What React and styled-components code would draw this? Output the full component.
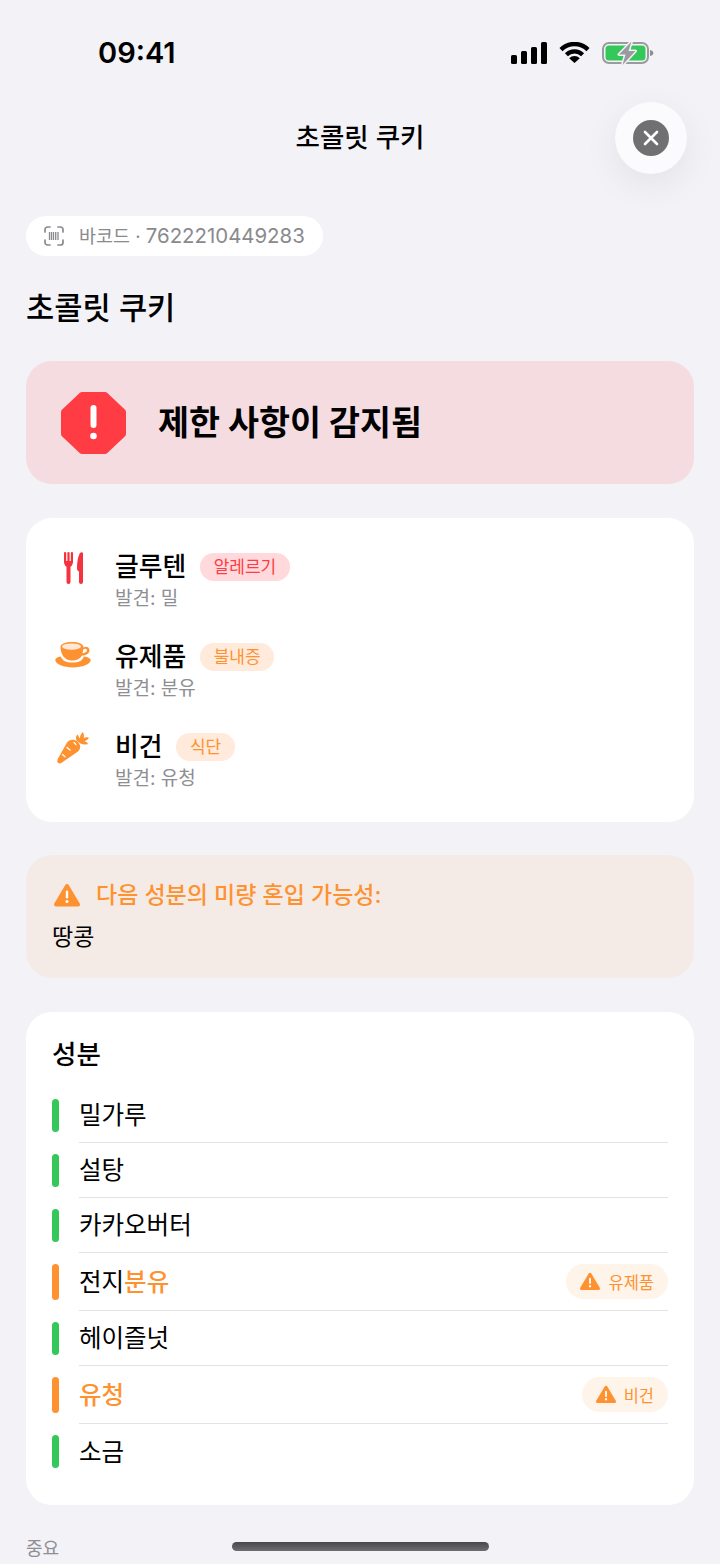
import React from 'react';
import styled, { createGlobalStyle } from 'styled-components';

const COLORS = {
  page: '#f2f2f7',
  white: '#ffffff',
  black: '#000000',
  gray: '#8e8e93',
  red: '#ff3b43',
  orange: '#ff9230',
  green: '#34c759',
  line: '#e3e3e6',
};

const FONT = '"Inter", "Noto Sans CJK KR", sans-serif';

const GlobalStyle = createGlobalStyle`
  html, body {
    margin: 0;
    padding: 0;
    background: ${COLORS.page};
    font-family: ${FONT};
    color: ${COLORS.black};
  }
  * {
    box-sizing: border-box;
  }
`;

const SignalIcon = () => (
  <svg width="36" height="22" viewBox="0 0 36 22">
    <rect x="0" y="13" width="6" height="9" rx="1.5" />
    <rect x="10" y="9" width="6" height="13" rx="1.5" />
    <rect x="20" y="5" width="6" height="17" rx="1.5" />
    <rect x="30" y="0" width="6" height="22" rx="1.5" />
  </svg>
);

const WifiIcon = () => (
  <svg width="31" height="21" viewBox="0 0 31 21">
    <path d="M2 7.6A19 19 0 0 1 29 7.6" fill="none" stroke="#000" strokeWidth="4.4" />
    <path d="M7.4 12.8A11.5 11.5 0 0 1 23.6 12.8" fill="none" stroke="#000" strokeWidth="4.2" />
    <path d="M15.5 21L10.2 16.2A7.4 7.4 0 0 1 20.8 16.2Z" />
  </svg>
);

const BatteryIcon = () => (
  <svg width="52" height="26" viewBox="0 0 52 26">
    <rect x="1" y="3" width="45" height="20" rx="6" fill="none" stroke="#9b9b9f" strokeWidth="2" />
    <rect x="3.5" y="5.5" width="40" height="15" rx="3.5" fill={COLORS.green} />
    <path d="M48 10c2 .4 3.4 1.4 3.4 3s-1.4 2.6-3.4 3z" fill="#8e8e92" />
    <path
      d="M29.500 1.500L17 14.500H23.500L20.500 25L33.500 11H26.500Z"
      fill="#9b9b9f"
      stroke={COLORS.page}
      strokeWidth="3"
      strokeLinejoin="round"
      paintOrder="stroke"
    />
  </svg>
);

const CloseGlyph = () => (
  <svg width="36" height="36" viewBox="0 0 36 36">
    <circle cx="18" cy="18" r="18" fill="#707072" />
    <path d="M12 12l12 12M24 12L12 24" stroke="#fff" strokeWidth="2.6" strokeLinecap="round" />
  </svg>
);

const BarcodeIcon = () => (
  <svg width="20" height="20" viewBox="0 0 20 20" fill="none">
    <path
      d="M1 6V3.5A2.5 2.5 0 0 1 3.5 1H6M14 1h2.500A2.500 2.500 0 0 1 19 3.500V6M19 14v2.500a2.500 2.500 0 0 1-2.500 2.500H14M6 19H3.500A2.500 2.500 0 0 1 1 16.500V14"
      stroke="#8a8a8e"
      strokeWidth="1.7"
      strokeLinecap="round"
    />
    <path d="M5.500 6v8M7.500 6v8M9.500 6v8M11.700 6v8M14 6v8" stroke="#8a8a8e" strokeWidth="1.300" />
  </svg>
);

const StopIcon = () => (
  <svg width="67" height="64" viewBox="0 0 67 64">
    <path
      d="M22 4H45L63 21V43L45 60H22L4 43V21Z"
      fill={COLORS.red}
      stroke={COLORS.red}
      strokeWidth="6"
      strokeLinejoin="round"
    />
    <rect x="30.500" y="14" width="6" height="23" rx="3" fill="#fff" />
    <circle cx="33.500" cy="45" r="3.300" fill="#fff" />
  </svg>
);

const UtensilsIcon = () => (
  <svg width="21" height="32" viewBox="0 0 21 32" fill="#f5333f">
    <rect x="1" y="0" width="2.200" height="11" rx="1" />
    <rect x="4.400" y="0" width="2.200" height="11" rx="1" />
    <rect x="7.800" y="0" width="2.200" height="11" rx="1" />
    <path d="M1 9H10C10 12 9 14 7.500 14.800V30a2 2 0 0 1-4 0V14.800C2 14 1 12 1 9Z" />
    <path d="M16.500 2C16.500.5 19.500-.5 20 1V30a2 2 0 0 1-4 0V19.500C14.500 19 14 18 14 16C14 10 15 5 16.500 2Z" />
  </svg>
);

const CupIcon = () => (
  <svg width="36" height="26" viewBox="0 0 36 26" fill={COLORS.orange}>
    <path d="M5.500 14.500C8 19 11 20.500 17.500 20.500C24 20.500 27 19 29 14.500C33 15 35.700 16.500 35.700 18.300C35.700 22 27 25.500 18 25.500C9 25.500 .3 22 .3 18.300C.3 16.500 2 15 5.500 14.500Z" />
    <path d="M5.500 5C5.500 1.500 11 0 17 0C23 0 28.500 1.500 28.500 5.500C31 3.800 34.500 5 34.500 8.200C34.500 11.500 30.500 13.500 27 13.500C25 16.800 22 18.500 17 18.500C9.500 18.500 5.500 12 5.500 5ZM28.200 7.500C28 9 27.800 10 27.500 11.200C29.700 11 32 10 32 8.200C32 6.800 29.700 6.200 28.200 7.500Z" fillRule="evenodd" />
    <ellipse cx="16.500" cy="4.600" rx="9.500" ry="3.200" fill="#ffe9d6" />
  </svg>
);

const CarrotIcon = () => (
  <svg width="32" height="32" viewBox="0 0 32 32" fill={COLORS.orange}>
    <path d="M1 30.800C0 29.800 .2 28.300 1 26.500L10 10.500C12 7.500 17 6.500 20.500 9.500C24 12.500 24 17 21 19.500L5 30.500C3.300 31.600 1.900 31.700 1 30.800Z" />
    <path d="M19.500 8.500C18.500 6 19 3.500 20.500 2.500C21.500 4 22 5 22.800 6.500C23 4 23.800 2 26 0C26.800 1.500 27.300 3.500 26.700 6C28.500 5 30 5 31.800 5.500C31.300 7.500 29 9 27 9.300C29 9.500 30.500 10.500 31 12C28.500 13 25.500 12.700 23.500 11.500C22.300 10.500 20.800 9.500 19.500 8.500Z" />
    <path d="M10 15.500L13 18M5.500 22.500L8 24.800M17 10.500L19 12.500" stroke="#fff" strokeWidth="1.300" strokeLinecap="round" />
  </svg>
);

const WarningIcon = ({ size = 26 }) => (
  <svg width={size} height={size * (24 / 26)} viewBox="0 0 26 24">
    <path
      d="M13 3L24 21.500H2Z"
      fill={COLORS.orange}
      stroke={COLORS.orange}
      strokeWidth="4"
      strokeLinejoin="round"
    />
    <rect x="11.800" y="7.500" width="2.400" height="8" rx="1.200" fill="#fff" />
    <circle cx="13" cy="18.500" r="1.500" fill="#fff" />
  </svg>
);

const RESTRICTIONS = [
  { name: '글루텐', tag: '알레르기', found: '발견: 밀', Icon: UtensilsIcon, tone: 'red' },
  { name: '유제품', tag: '불내증', found: '발견: 분유', Icon: CupIcon, tone: 'orange' },
  { name: '비건', tag: '식단', found: '발견: 유청', Icon: CarrotIcon, tone: 'orange' },
];

const INGREDIENTS = [
  { key: 'flour', parts: [{ text: '밀가루' }] },
  { key: 'sugar', parts: [{ text: '설탕' }] },
  { key: 'cacao', parts: [{ text: '카카오버터' }] },
  { key: 'milk', parts: [{ text: '전지' }, { text: '분유', hit: true }], badge: '유제품' },
  { key: 'hazelnut', parts: [{ text: '헤이즐넛' }] },
  { key: 'whey', parts: [{ text: '유청', hit: true }], badge: '비건' },
  { key: 'salt', parts: [{ text: '소금' }] },
];

const App = () => {
  return (
    <Screen>
      <GlobalStyle />
      <StatusBar>
        <Time>09:41</Time>
        <StatusIcons>
          <SignalIcon />
          <WifiIcon />
          <BatteryIcon />
        </StatusIcons>
      </StatusBar>

      <NavBar>
        <NavTitle>초콜릿 쿠키</NavTitle>
        <CloseButton>
          <CloseGlyph />
        </CloseButton>
      </NavBar>

      <Content>
        <BarcodePill>
          <BarcodeIcon />
          <BarcodeText>
            바코드 · <Digits>7622210449283</Digits>
          </BarcodeText>
        </BarcodePill>
        <ProductName>초콜릿 쿠키</ProductName>

        <AlertCard>
          <StopIcon />
          <AlertTitle>제한 사항이 감지됨</AlertTitle>
        </AlertCard>

        <RestrictionCard>
          {RESTRICTIONS.map(({ name, tag, found, Icon, tone }) => (
            <RestrictionRow key={name}>
              <IconSlot>
                <Icon />
              </IconSlot>
              <div>
                <NameLine>
                  <RestrictionName>{name}</RestrictionName>
                  <Tag $tone={tone}>{tag}</Tag>
                </NameLine>
                <FoundText>{found}</FoundText>
              </div>
            </RestrictionRow>
          ))}
        </RestrictionCard>

        <TraceCard>
          <TraceHeading>
            <WarningIcon />
            <TraceHeadingText>다음 성분의 미량 혼입 가능성:</TraceHeadingText>
          </TraceHeading>
          <TraceText>땅콩</TraceText>
        </TraceCard>

        <IngredientCard>
          <IngredientTitle>성분</IngredientTitle>
          {INGREDIENTS.map(({ key, parts, badge }) => (
            <IngredientRow key={key}>
              <StatusBarMark $flagged={Boolean(badge)} />
              <IngredientBody>
                <IngredientName>
                  {parts.map((part) => (
                    <NamePart key={part.text} $hit={part.hit}>
                      {part.text}
                    </NamePart>
                  ))}
                </IngredientName>
                {badge && (
                  <Badge>
                    <WarningIcon size={20} />
                    {badge}
                  </Badge>
                )}
              </IngredientBody>
            </IngredientRow>
          ))}
        </IngredientCard>

        <FootLabel>중요</FootLabel>
      </Content>

      <HomeIndicator />
    </Screen>
  );
};

const Screen = styled.div`
  position: relative;
  width: 720px;
  height: 1564px;
  overflow: hidden;
  background: ${COLORS.page};
`;

const StatusBar = styled.div`
  height: 100px;
  padding: 42px 66px 0 98px;
  display: flex;
  justify-content: space-between;
  align-items: flex-start;
`;

const Time = styled.div`
  font-size: 29px;
  line-height: 22px;
  font-weight: 600;
`;

const StatusIcons = styled.div`
  display: flex;
  align-items: flex-start;
  gap: 12px;

  svg:last-child {
    margin-top: -2px;
  }
`;

const NavBar = styled.div`
  position: relative;
  height: 74px;
  display: flex;
  align-items: center;
  justify-content: center;
`;

const NavTitle = styled.div`
  font-size: 26.500px;
  line-height: 34px;
  font-weight: 500;
`;

const CloseButton = styled.div`
  position: absolute;
  top: 2px;
  right: 33px;
  width: 72px;
  height: 72px;
  border-radius: 50%;
  background: #fbfbfd;
  box-shadow: 0 10px 36px rgba(0, 0, 0, 0.07);
  display: flex;
  align-items: center;
  justify-content: center;
`;

const Content = styled.div`
  padding: 42px 26px 0;
  display: flex;
  flex-direction: column;
  align-items: stretch;
`;

const BarcodePill = styled.div`
  align-self: flex-start;
  height: 40px;
  width: 297px;
  padding: 0 18px;
  border-radius: 20px;
  background: ${COLORS.white};
  display: flex;
  align-items: center;
  gap: 15px;
  font-size: 18.500px;
  color: #8a8a8e;
  white-space: nowrap;
`;

const BarcodeText = styled.span`
  margin-bottom: 2px;
`;

const Digits = styled.span`
  font-size: 20.400px;
`;

const ProductName = styled.h1`
  margin: 31px 0 32px;
  font-size: 30.700px;
  line-height: 42px;
  font-weight: 500;
`;

const AlertCard = styled.div`
  height: 123px;
  padding: 0 34px;
  border-radius: 26px;
  background: #f5dce1;
  display: flex;
  align-items: center;
  gap: 31px;
`;

const AlertTitle = styled.div`
  font-size: 33.700px;
  line-height: 42px;
  font-weight: 700;
`;

const RestrictionCard = styled.div`
  margin-top: 34px;
  padding: 33px 26px 31px;
  border-radius: 26px;
  background: ${COLORS.white};
  display: flex;
  flex-direction: column;
  gap: 30px;
`;

const RestrictionRow = styled.div`
  display: flex;
  align-items: flex-start;
  gap: 21px;
`;

const IconSlot = styled.div`
  width: 42px;
  padding-top: 1px;
  display: flex;
  justify-content: center;
`;

const NameLine = styled.div`
  height: 32px;
  display: flex;
  align-items: center;
  gap: 14px;
`;

const RestrictionName = styled.span`
  font-size: 25.800px;
  line-height: 34px;
  font-weight: 500;
`;

const Tag = styled.span`
  height: 28px;
  padding: 0 13.500px;
  border-radius: 14px;
  font-size: 17px;
  line-height: 28px;
  background: ${({ $tone }) => ($tone === 'red' ? '#ffd9dc' : '#ffeadb')};
  color: ${({ $tone }) => ($tone === 'red' ? COLORS.red : COLORS.orange)};
`;

const FoundText = styled.div`
  margin-top: 4px;
  font-size: 19px;
  line-height: 24px;
  color: ${COLORS.gray};
`;

const TraceCard = styled.div`
  margin-top: 33px;
  height: 123px;
  padding: 26px 26px 0 28px;
  border-radius: 26px;
  background: #f5ebe6;
`;

const TraceHeading = styled.div`
  display: flex;
  align-items: center;
  gap: 16px;
  height: 28px;
  font-size: 23px;
  font-weight: 500;
  color: ${COLORS.orange};
`;

const TraceHeadingText = styled.span`
  margin-bottom: 4px;
`;

const TraceText = styled.div`
  margin: 13px 0 0 -2px;
  font-size: 23px;
  line-height: 30px;
`;

const IngredientCard = styled.div`
  margin-top: 34px;
  height: 493px;
  padding: 25px 26px 0;
  border-radius: 26px;
  background: ${COLORS.white};
`;

const IngredientTitle = styled.div`
  height: 34px;
  margin-bottom: 17px;
  font-size: 26.500px;
  line-height: 34px;
  font-weight: 500;
`;

const IngredientRow = styled.div`
  display: flex;
  align-items: stretch;
  gap: 20px;
`;

const StatusBarMark = styled.div`
  width: 7px;
  margin: 11px 0;
  border-radius: 4px;
  background: ${({ $flagged }) => ($flagged ? COLORS.orange : COLORS.green)};
`;

const IngredientBody = styled.div`
  flex: 1;
  min-height: 55px;
  padding: 11px 0;
  display: flex;
  align-items: center;
  justify-content: space-between;
  border-bottom: 1px solid ${COLORS.line};

  ${IngredientRow}:last-child & {
    border-bottom: 0;
  }
`;

const IngredientName = styled.div`
  font-size: 24.500px;
  line-height: 32px;
`;

const NamePart = styled.span`
  color: ${({ $hit }) => ($hit ? COLORS.orange : 'inherit')};
  font-weight: ${({ $hit }) => ($hit ? 500 : 400)};
`;

const Badge = styled.div`
  height: 35px;
  padding: 0 14px;
  border-radius: 18px;
  background: #fff4ea;
  display: flex;
  align-items: center;
  gap: 8px;
  font-size: 16.500px;
  color: ${COLORS.orange};
`;

const FootLabel = styled.div`
  margin-top: 32px;
  font-size: 18px;
  line-height: 24px;
  color: ${COLORS.gray};
`;

const HomeIndicator = styled.div`
  position: absolute;
  left: 232px;
  bottom: 13px;
  width: 257px;
  height: 9px;
  border-radius: 5px;
  background: linear-gradient(#48484c, #6e6e72);
`;

export default App;
